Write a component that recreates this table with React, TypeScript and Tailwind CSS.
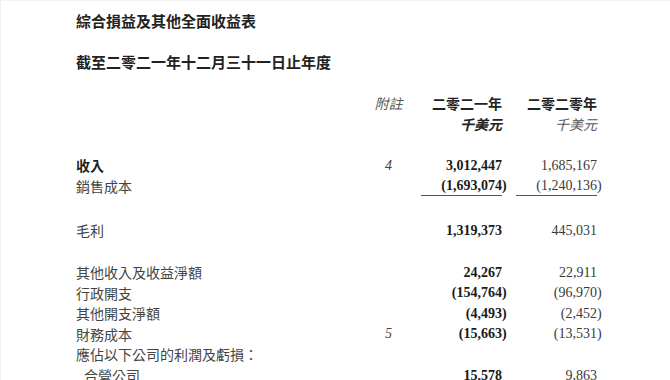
import React from "react";

const cjk = "font-['Noto_Sans_CJK_TC','Noto_Sans_CJK_SC',sans-serif]";
const serif = "font-['Liberation_Serif','Noto_Sans_CJK_TC',serif]";

function Num({ v, bold }: { v: string; bold?: boolean }) {
  // closing paren hangs outside the right edge, like a printed statement
  const neg = v.endsWith(")");
  return (
    <span className={`${serif} text-[14px] ${bold ? "font-bold text-[#1a1a1a]" : "text-[#3a3a3a]"}`}>
      {neg ? v.slice(0, -1) : v}
      {neg && <span className="inline-block w-0">)</span>}
    </span>
  );
}

type Row = {
  label: string;
  note?: string;
  cur?: string;
  prev?: string;
  strong?: boolean;
  indent?: boolean;
  rule?: boolean;
};

function Line({ r }: { r: Row }) {
  return (
    <div className="flex h-[20.6px] items-center">
      <div
        className={`w-[290px] ${cjk} text-[14px] leading-none ${
          r.strong ? "font-bold text-[#1f1f1f]" : "text-[#444]"
        } ${r.indent ? "pl-[8px]" : ""}`}
      >
        {r.label}
      </div>
      <div className={`w-[45px] text-center ${serif} italic text-[14px] text-[#444]`}>{r.note}</div>
      <div className={`ml-[10px] w-[81px] h-full flex items-center justify-end ${r.rule ? "border-b border-[#555]" : ""}`}>
        {r.cur && <Num v={r.cur} bold />}
      </div>
      <div className={`ml-[14px] w-[81px] h-full flex items-center justify-end ${r.rule ? "border-b border-[#555]" : ""}`}>
        {r.prev && <Num v={r.prev} />}
      </div>
    </div>
  );
}

const top: Row[] = [
  { label: "收入", note: "4", cur: "3,012,447", prev: "1,685,167", strong: true },
  { label: "銷售成本", cur: "(1,693,074)", prev: "(1,240,136)", rule: true },
];

const rest: Row[] = [
  { label: "其他收入及收益淨額", cur: "24,267", prev: "22,911" },
  { label: "行政開支", cur: "(154,764)", prev: "(96,970)" },
  { label: "其他開支淨額", cur: "(4,493)", prev: "(2,452)" },
  { label: "財務成本", note: "5", cur: "(15,663)", prev: "(13,531)" },
  { label: "應佔以下公司的利潤及虧損：" },
  { label: "合營公司", cur: "15,578", prev: "9,863", indent: true },
];

export default function App() {
  return (
    <div className="w-[670px] h-[380px] overflow-hidden bg-white border-l border-t border-[#f2f2f2]">
      <div className="pl-[75px] pt-[10px]">
        <h1 className={`${cjk} text-[15px] leading-[20px] font-bold text-[#222]`}>綜合損益及其他全面收益表</h1>
        <h2 className={`${cjk} mt-[21px] text-[15px] leading-[20px] font-bold text-[#222]`}>
          截至二零二一年十二月三十一日止年度
        </h2>

        <div className="mt-[21px] flex h-[21px] items-center">
          <div className="w-[290px]" />
          <div className={`w-[45px] text-center ${cjk} italic text-[14px] text-[#555]`}>附註</div>
          <div className={`ml-[10px] w-[81px] text-right ${cjk} text-[14px] font-bold text-[#222]`}>二零二一年</div>
          <div className={`ml-[14px] w-[81px] text-right ${cjk} text-[14px] font-bold text-[#222]`}>二零二零年</div>
        </div>
        <div className="flex h-[21px] items-center">
          <div className="w-[335px]" />
          <div className={`ml-[10px] w-[81px] text-right ${cjk} italic text-[14px] font-bold text-[#222]`}>千美元</div>
          <div className={`ml-[14px] w-[81px] text-right ${cjk} italic text-[14px] text-[#555]`}>千美元</div>
        </div>

        <div className="mt-[20px]">
          {top.map((r) => (
            <Line key={r.label} r={r} />
          ))}
        </div>

        <div className="mt-[24px]">
          <Line r={{ label: "毛利", cur: "1,319,373", prev: "445,031" }} />
        </div>

        <div className="mt-[21px]">
          {rest.map((r) => (
            <Line key={r.label} r={r} />
          ))}
        </div>
      </div>
    </div>
  );
}
